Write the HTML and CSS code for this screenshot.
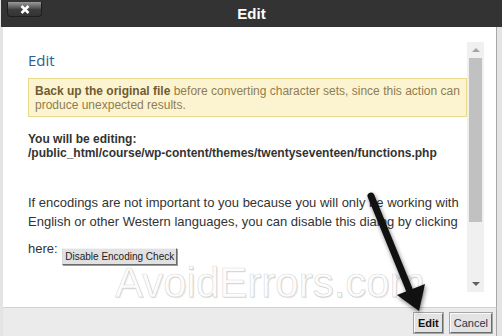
FILE: index.html
```html
<!DOCTYPE html>
<html>
<head>
    <link rel="stylesheet" href="styles.css">
</head>
<body>
    <div class="dialog">
        <div class="titlebar">
            <button class="close-btn">
                <svg width="10" height="9" viewBox="0 0 10 9"><path d="M1.5 1 L8.5 8 M8.5 1 L1.5 8" stroke="#fff" stroke-width="2.6"/></svg>
            </button>
            <div class="title">Edit</div>
        </div>

        <div class="dialog-body">
            <div class="scroll-content">
                <h2>Edit</h2>
                <div class="warning"><b>Back up the original file</b> before converting character sets, since this action can produce unexpected results.</div>
                <p class="editing">You will be editing:<br>/public_html/course/wp-content/themes/twentyseventeen/functions.php</p>
                <p class="note">If encodings are not important to you because you will only be working with English or other Western languages, you can disable this dialog by clicking here: <button class="small-btn">Disable Encoding Check</button></p>
                <p class="note next">Please select the character encoding of the file that you wish to edit below.</p>
            </div>
            <div class="scrollbar">
                <div class="sb-btn"><span class="tri-up"></span></div>
                <div class="sb-thumb"></div>
                <div class="sb-space"></div>
                <div class="sb-btn"><span class="tri-down"></span></div>
            </div>
        </div>

        <div class="footer">
            <button class="btn btn-default">Edit</button>
            <button class="btn">Cancel</button>
        </div>

        <div class="watermark">AvoidErrors.com</div>
        <svg class="arrow" viewBox="0 0 502 336">
            <line x1="371" y1="196" x2="409" y2="289" stroke="#111" stroke-width="7" stroke-linecap="round"/>
            <polygon points="397,295 425,284 419,311" fill="#111"/>
        </svg>
    </div>
</body>
</html>
```

FILE: styles.css
```css
* {
    box-sizing: border-box;
}

body {
    margin: 0;
    background: #e4e4e4;
    font-family: "Liberation Sans", Arial, sans-serif;
    overflow: hidden;
}

.dialog {
    position: relative;
    height: 336px;
    display: flex;
    flex-direction: column;
}

/* title bar */
.titlebar {
    height: 27px;
    margin-left: 1px;
    background: #333;
    display: grid;
    grid-template-columns: 1fr auto 1fr;
    align-items: start;
    flex-shrink: 0;
}

.close-btn {
    justify-self: start;
    width: 35px;
    height: 15px;
    margin: 2px 0 0 6px;
    padding: 0;
    border: 1px solid #1f1f1f;
    border-top: none;
    border-radius: 0 0 4px 4px;
    background: linear-gradient(#9a9a9a, #5a5a5a 40%, #3c3c3c 55%, #343434);
    display: flex;
    justify-content: center;
    align-items: center;
}

.title {
    color: #fff;
    font-weight: bold;
    font-size: 15px;
    line-height: 27px;
}

/* body */
.dialog-body {
    height: 280px;
    margin: 0 5px 0 3px;
    padding: 15px 12px 15px 10px;
    background: #fff;
    border-right: 1px solid #a8a8a8;
    display: flex;
    flex-shrink: 0;
}

.scroll-content {
    flex: 1;
    height: 247px;
    overflow: hidden;
    padding: 8px 0 0 15px;
    color: #333;
}

h2 {
    margin: 0 0 8px;
    font-family: "Open Sans", sans-serif;
    font-weight: normal;
    font-size: 15px;
    line-height: 20px;
    color: #2f5f8c;
}

.warning {
    background: #fcf4d0;
    border: 1px solid #e7da8c;
    padding: 5px 6px 4px;
    font-size: 12px;
    line-height: 14px;
    color: #8f7d50;
}

.warning b {
    color: #6f5c32;
}

.editing {
    margin: 15px 0 0;
    font-size: 12px;
    line-height: 14px;
    font-weight: bold;
}

.note {
    margin: 33px 0 0;
    font-size: 13px;
    line-height: 19px;
}

.note.next {
    margin-top: 19px;
}

.small-btn {
    display: inline-block;
    margin: 17px 0 0 1px;
    vertical-align: -7px;
    padding: 1px 2px;
    font-family: "Liberation Sans", Arial, sans-serif;
    font-size: 10px;
    line-height: 13px;
    color: #222;
    background: #e1e1e1;
    border: 1px solid;
    border-color: #f4f4f4 #6b6b6b #6b6b6b #d8d8d8;
    box-shadow: 1px 1px 0 #9a9a9a;
}

/* fake scrollbar */
.scrollbar {
    width: 17px;
    background: #f0f0f0;
    display: flex;
    flex-direction: column;
}

.sb-btn {
    height: 16px;
    display: flex;
    justify-content: center;
    align-items: center;
}

.tri-up {
    border-left: 4px solid transparent;
    border-right: 4px solid transparent;
    border-bottom: 4px solid #a3a3a3;
}

.tri-down {
    border-left: 4px solid transparent;
    border-right: 4px solid transparent;
    border-top: 4px solid #606060;
}

.sb-thumb {
    height: 164px;
    margin: 0 2px 0 2px;
    background: #c1c1c1;
}

.sb-space {
    flex: 1;
}

/* footer */
.footer {
    flex: 1;
    margin: 0 5px 0 3px;
    padding: 5px 4px 0 0;
    background: #ebebeb;
    border-top: 1px solid #d2d2d2;
    border-right: 1px solid #a8a8a8;
    display: flex;
    justify-content: flex-end;
    align-items: flex-start;
    gap: 7px;
}

.btn {
    height: 20px;
    padding: 2px 3px;
    font-family: "Liberation Sans", Arial, sans-serif;
    font-size: 11px;
    line-height: 14px;
    color: #24364f;
    background: #e3e3e3;
    border: 1px solid;
    border-color: #fafafa #6a6a6a #6a6a6a #fafafa;
    box-shadow: 0 0 0 1px #a5a5a5;
}

.btn-default {
    font-weight: bold;
    color: #111;
}

/* screenshot overlays */
.watermark {
    position: absolute;
    left: 115px;
    top: 262px;
    font-size: 42px;
    line-height: 42px;
    color: rgba(255, 255, 255, 0.92);
    -webkit-text-stroke: 0.6px rgba(150, 150, 150, 0.4);
    text-shadow: 1px 1px 1px rgba(0, 0, 0, 0.12);
    pointer-events: none;
}

.arrow {
    position: absolute;
    left: 0;
    top: 0;
    width: 502px;
    height: 336px;
    pointer-events: none;
    filter: drop-shadow(1px 2px 2px rgba(0, 0, 0, 0.5));
}
```
